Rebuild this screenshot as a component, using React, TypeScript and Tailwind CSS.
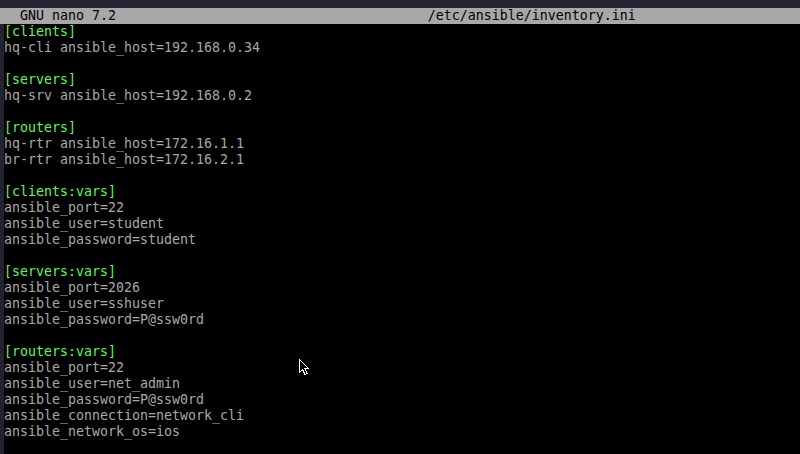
const lines: { text: string; section?: boolean }[] = [
  { text: '[clients]', section: true },
  { text: 'hq-cli ansible_host=192.168.0.34' },
  { text: '' },
  { text: '[servers]', section: true },
  { text: 'hq-srv ansible_host=192.168.0.2' },
  { text: '' },
  { text: '[routers]', section: true },
  { text: 'hq-rtr ansible_host=172.16.1.1' },
  { text: 'br-rtr ansible_host=172.16.2.1' },
  { text: '' },
  { text: '[clients:vars]', section: true },
  { text: 'ansible_port=22' },
  { text: 'ansible_user=student' },
  { text: 'ansible_password=student' },
  { text: '' },
  { text: '[servers:vars]', section: true },
  { text: 'ansible_port=2026' },
  { text: 'ansible_user=sshuser' },
  { text: 'ansible_password=P@ssw0rd' },
  { text: '' },
  { text: '[routers:vars]', section: true },
  { text: 'ansible_port=22' },
  { text: 'ansible_user=net_admin' },
  { text: 'ansible_password=P@ssw0rd' },
  { text: 'ansible_connection=network_cli' },
  { text: 'ansible_network_os=ios' },
];

function Cursor() {
  return (
    <svg
      className="absolute left-[299px] top-[359px]"
      width="12"
      height="17"
      viewBox="0 0 12 17"
      shapeRendering="crispEdges"
    >
      <path
        d="M0.5 0.5 L0.5 13.5 L3.5 10.5 L6 15.5 L8 14.5 L5.8 9.8 L10 9.8 Z"
        fill="#000"
        stroke="#fff"
        strokeWidth="1"
        strokeLinejoin="miter"
      />
    </svg>
  );
}

export default function App() {
  return (
    <div className="relative w-[800px] h-[454px] overflow-hidden bg-[#23242f] flex flex-col">
      <div className="h-[8px] shrink-0" />
      <div className="flex flex-1 min-h-0">
        <div className="w-[4px] shrink-0" />
        <div
          className="flex-1 bg-black text-[13.29px] leading-[16px] whitespace-pre"
          style={{ fontFamily: '"DejaVu Sans Mono", "Liberation Mono", monospace' }}
        >
          <div className="h-[16px] bg-[#a8a8a8] text-black -ml-[4px] pl-[4px]">
            {'  GNU nano 7.2                                       /etc/ansible/inventory.ini'}
          </div>
          {lines.map((l, i) => (
            <div
              key={i}
              className={`h-[16px] ${l.section ? 'text-[#54fc54]' : 'text-[#a8a8a8]'}`}
            >
              {l.text}
            </div>
          ))}
        </div>
      </div>
      <Cursor />
    </div>
  );
}
